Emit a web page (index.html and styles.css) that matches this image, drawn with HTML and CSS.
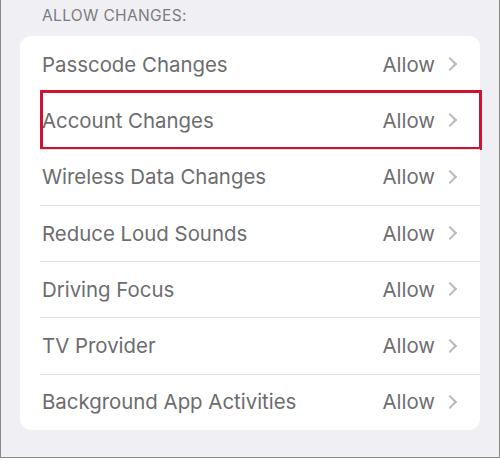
FILE: index.html
```html
<!DOCTYPE html>
<html lang="en">
<head>
    <meta charset="UTF-8">
    <title>Allow Changes</title>
    <link rel="stylesheet" href="styles.css">
</head>
<body>
    <div class="screen">
        <div class="section-title">ALLOW CHANGES:</div>
        <div class="card">
            <div class="row"><span class="label">Passcode Changes</span><span class="value">Allow</span><span class="chevron"></span></div>
            <div class="row highlighted"><span class="label">Account Changes</span><span class="value">Allow</span><span class="chevron"></span></div>
            <div class="row"><span class="label">Wireless Data Changes</span><span class="value">Allow</span><span class="chevron"></span></div>
            <div class="row"><span class="label">Reduce Loud Sounds</span><span class="value">Allow</span><span class="chevron"></span></div>
            <div class="row"><span class="label">Driving Focus</span><span class="value">Allow</span><span class="chevron"></span></div>
            <div class="row"><span class="label">TV Provider</span><span class="value">Allow</span><span class="chevron"></span></div>
            <div class="row"><span class="label">Background App Activities</span><span class="value">Allow</span><span class="chevron"></span></div>
        </div>
    </div>
</body>
</html>
```
FILE: styles.css
```css
body {
    margin: 0;
    background-color: #fff;
    font-family: Inter, "Liberation Sans", sans-serif;
}
.screen {
    box-sizing: border-box;
    width: 500px;
    height: 458px;
    background-color: #f0f0f4;
    border: 1px solid #8a8a8a;
    border-top: none;
    padding: 0 19px;
}
.section-title {
    height: 36px;
    padding-left: 22px;
    font-size: 15.6px;
    line-height: 31px;
    color: #7c7c80;
    letter-spacing: 0.3px;
}
.card {
    background-color: #fff;
    border-radius: 11px;
    padding-left: 20px;
}
.row {
    position: relative;
    display: flex;
    align-items: center;
    height: 56.3px;
    padding-right: 23px;
    font-size: 20.4px;
    color: #6c6c6e;
}
.row + .row {
    box-shadow: inset 0 1px 0 #e2e2e4;
}
.label {
    flex: 1;
    padding-left: 2px;
}
.value {
    color: #6e6e70;
}
.chevron {
    width: 8px;
    height: 8px;
    margin-left: 10px;
    margin-right: 2px;
    border-top: 2px solid #b8b8bc;
    border-right: 2px solid #b8b8bc;
    transform: rotate(45deg);
}
/* red highlight frame */
.highlighted::after {
    content: "";
    position: absolute;
    left: 0;
    right: -2px;
    top: -2px;
    bottom: -1px;
    border: 3px solid #cf1230;
}
```
